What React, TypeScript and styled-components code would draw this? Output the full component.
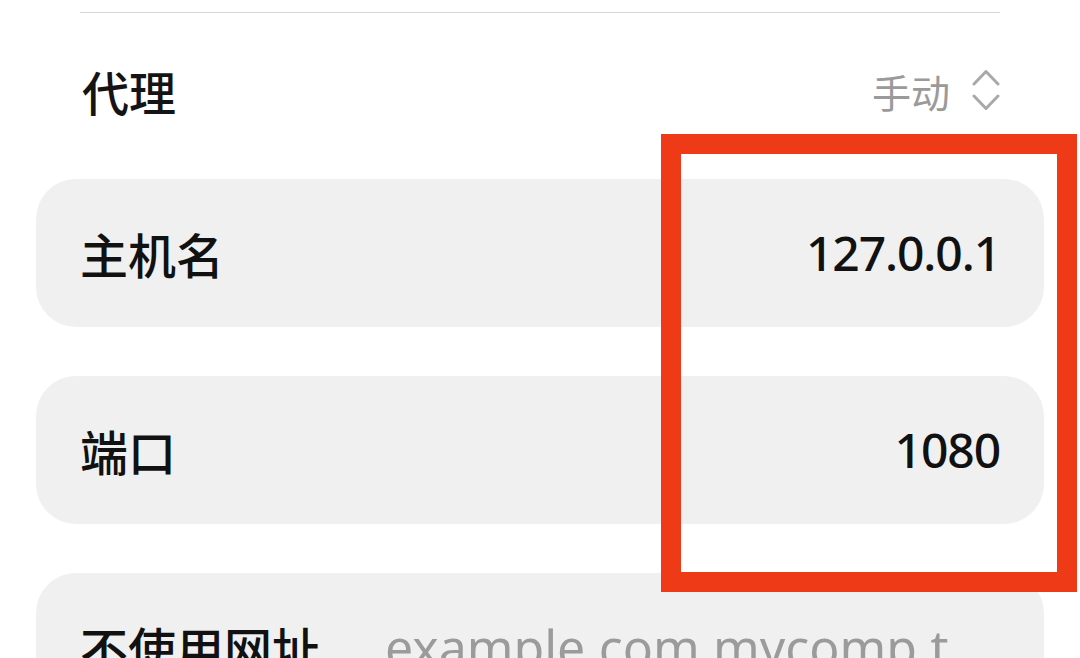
import React from "react";
import styled, { createGlobalStyle } from "styled-components";

const GlobalStyle = createGlobalStyle`
    html, body {
        margin: 0;
        padding: 0;
        background: #ffffff;
    }
    body {
        font-family: "Noto Sans", "Noto Sans CJK SC", sans-serif;
        color: #111111;
    }
`;

const Page = styled.div`
    position: relative;
    width: 1080px;
    height: 658px;
    overflow: hidden;
    padding-top: 12px;
    box-sizing: border-box;
    background: #ffffff;
`;

const Divider = styled.div`
    height: 1px;
    margin: 0 80px;
    background: #d6d6d6;
`;

/* 代理 + 模式选择 */
const SectionHeader = styled.div`
    height: 166px;
    display: flex;
    align-items: center;
    justify-content: space-between;
    padding: 0 80px 10px 82px;
    box-sizing: border-box;

    h2 {
        margin: 0;
        font-family: "Noto Sans CJK SC", sans-serif;
        font-size: 47px;
        font-weight: 500;
        color: #141414;
        line-height: 1.2;
    }
`;

const ModeSelect = styled.div`
    display: flex;
    align-items: center;
    gap: 22px;
    font-family: "Noto Sans CJK SC", sans-serif;
    font-size: 39px;
    color: #9a9a9a;
    line-height: 1.2;

    svg {
        display: block;
    }
`;

const FieldList = styled.div`
    display: flex;
    flex-direction: column;
    gap: 49px;
    padding: 0 36px;
`;

const Field = styled.div`
    height: 148px;
    flex-shrink: 0;
    display: flex;
    align-items: center;
    justify-content: space-between;
    padding: 0 44px;
    border-radius: 40px;
    background: #f0f0f0;
    box-sizing: border-box;
`;

const Label = styled.span`
    font-family: "Noto Sans CJK SC", sans-serif;
    font-size: 48px;
    font-weight: 500;
    color: #111111;
    white-space: nowrap;
    line-height: 1.3;
`;

const Value = styled.span`
    font-family: "Noto Sans", "Noto Sans CJK SC", sans-serif;
    font-size: 48px;
    font-weight: 500;
    letter-spacing: -1.1px;
    color: #111111;
    white-space: nowrap;
    line-height: 1.3;
`;

const Placeholder = styled.span`
    flex: 1;
    margin-left: 65px;
    font-family: "Noto Sans", "Noto Sans CJK SC", sans-serif;
    font-size: 50px;
    color: #9b9b9b;
    white-space: nowrap;
    line-height: 1.3;
`;

/* 截图上的红色标注框 */
const Highlight = styled.div`
    position: absolute;
    left: 661px;
    top: 134px;
    width: 416px;
    height: 458px;
    border: 20px solid #ef3a17;
    box-sizing: border-box;
    pointer-events: none;
`;

const UpDownIcon = () => (
    <svg width="28" height="44" viewBox="0 0 28 44" fill="none">
        <path
            d="M2 15 L14 2.5 L26 15"
            stroke="#a9a9a9"
            strokeWidth="3"
            strokeLinecap="round"
            strokeLinejoin="round"
        />
        <path
            d="M2 27 L14 39.5 L26 27"
            stroke="#a9a9a9"
            strokeWidth="3"
            strokeLinecap="round"
            strokeLinejoin="round"
        />
    </svg>
);

const fields = [
    { label: "主机名", value: "127.0.0.1" },
    { label: "端口", value: "1080" },
];

const App: React.FC = () => {
    return (
        <>
            <GlobalStyle />
            <Page>
                <Divider />
                <SectionHeader>
                    <h2>代理</h2>
                    <ModeSelect>
                        <span>手动</span>
                        <UpDownIcon />
                    </ModeSelect>
                </SectionHeader>
                <FieldList>
                    {fields.map((f) => (
                        <Field key={f.label}>
                            <Label>{f.label}</Label>
                            <Value>{f.value}</Value>
                        </Field>
                    ))}
                    <Field>
                        <Label>不使用网址</Label>
                        <Placeholder>example.com,mycomp.t</Placeholder>
                    </Field>
                </FieldList>
                <Highlight />
            </Page>
        </>
    );
};

export default App;
